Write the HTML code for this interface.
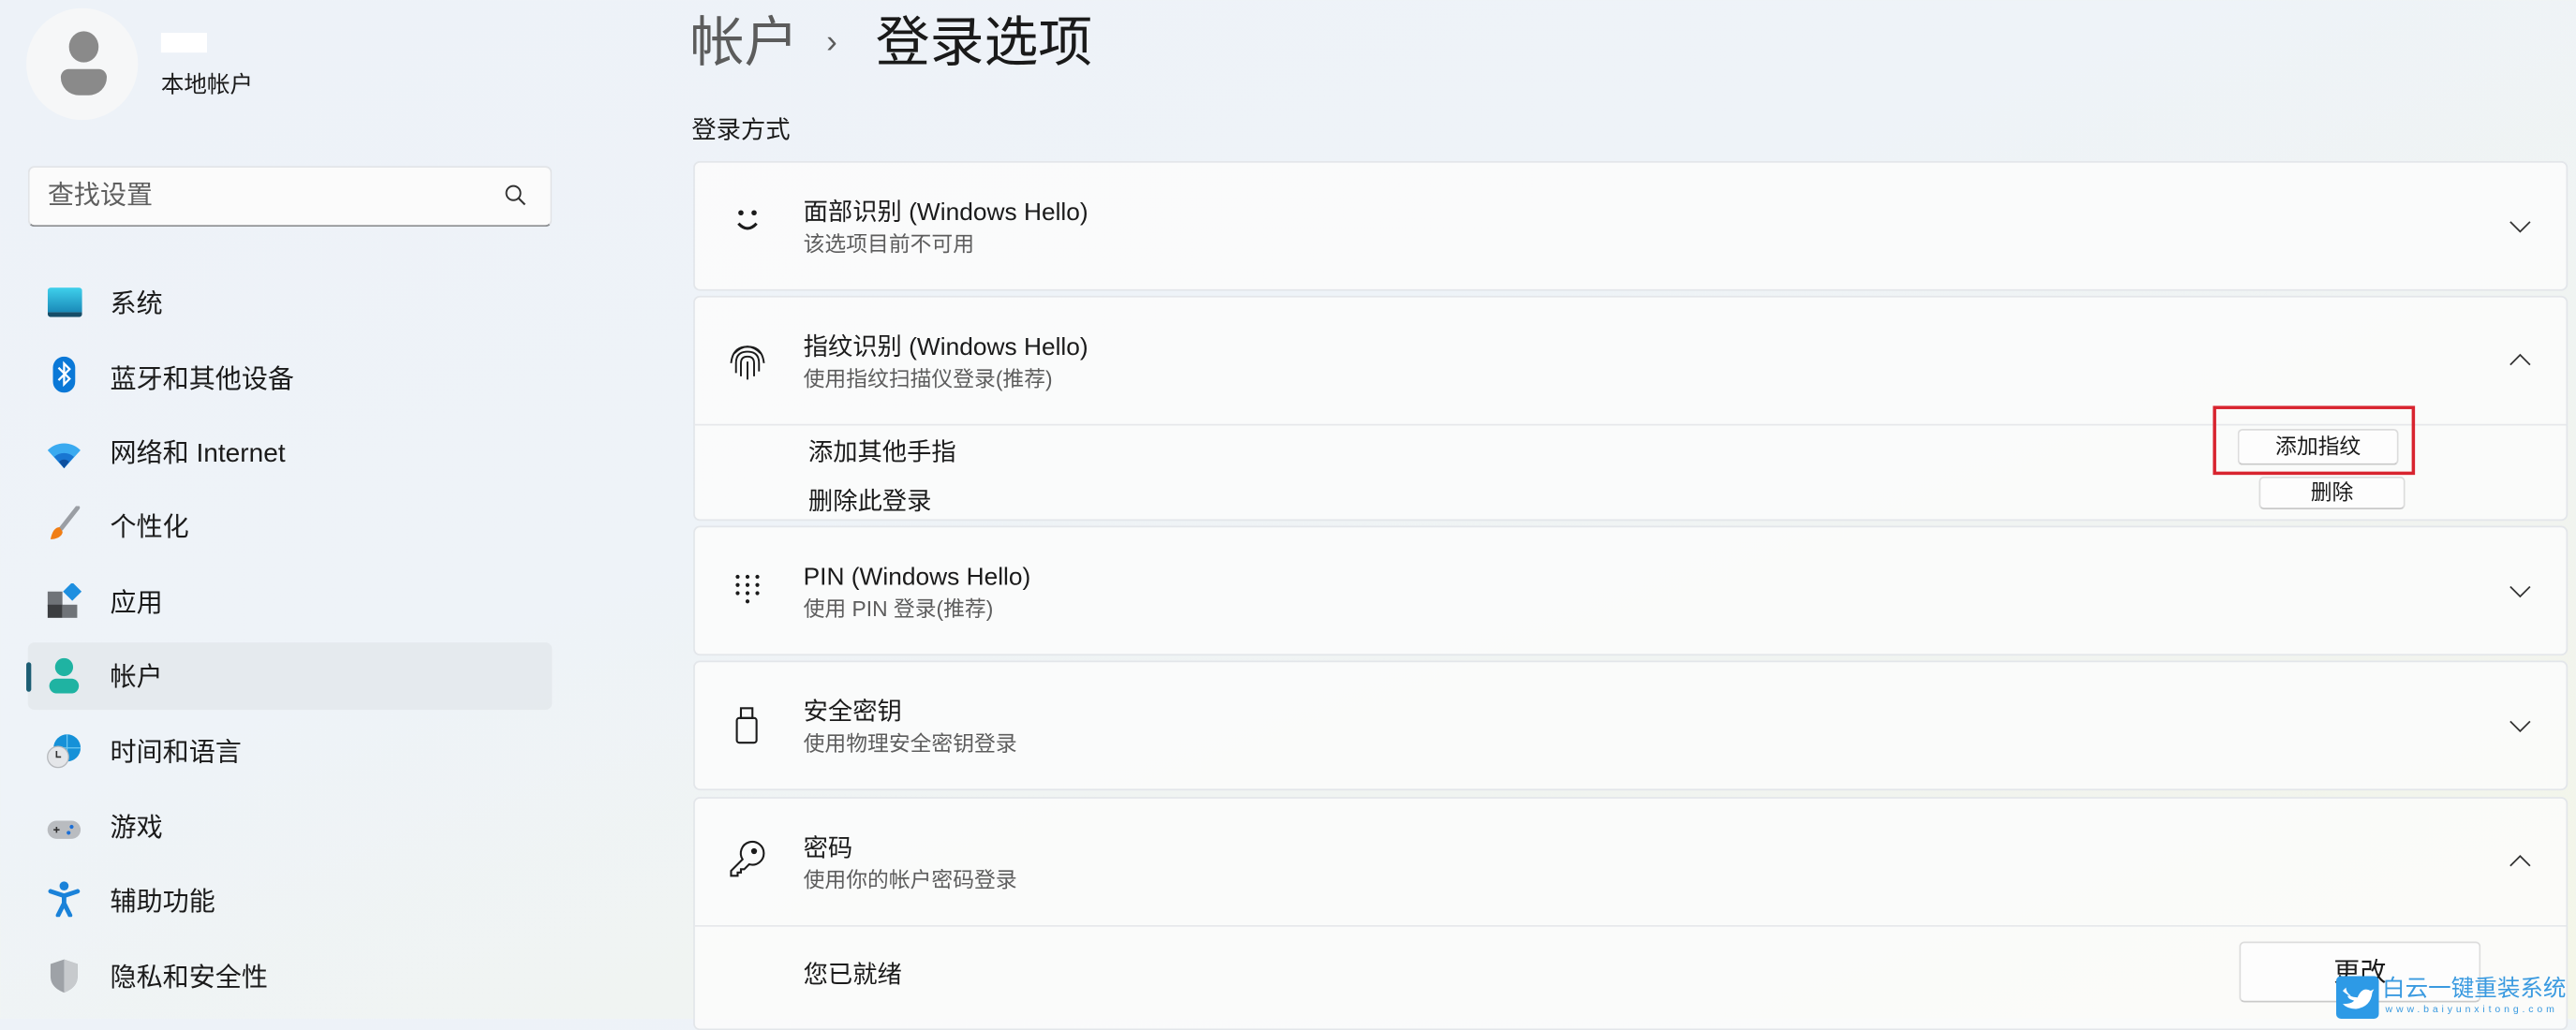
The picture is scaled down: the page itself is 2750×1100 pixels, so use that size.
<!DOCTYPE html>
<html><head><meta charset="utf-8">
<style>
html,body{margin:0;padding:0;width:2750px;height:1088px;overflow:hidden}
body{background:linear-gradient(160deg,#edf2f8 0%,#eef3f8 40%,#f1f4ef 75%,#f4f6e8 100%);font-family:"Liberation Sans","Noto Sans CJK SC",sans-serif;color:#1b1b1b}
#s{position:absolute;left:0;top:0;width:1568px;height:620px;transform:scale(1.75383,1.75484);transform-origin:0 0}
.a{position:absolute;white-space:nowrap}
.nav{position:absolute;left:67px;font-size:16px;line-height:20px;color:#1b1b1b}
.ic{position:absolute;left:28px;width:22px;height:22px}
.card{position:absolute;left:422px;width:1139px;background:rgba(251,252,252,0.85);border:1px solid #e3e6ea;border-radius:4px}
.t{position:absolute;left:66px;font-size:15px;line-height:20px;color:#1b1b1b}
.st{position:absolute;left:66px;font-size:13px;line-height:18px;color:#5d5d5d}
.chev{position:absolute;left:1104px;width:14px;height:8px}
.btn{position:absolute;background:#fdfdfd;border:1px solid #dcdcdc;border-bottom-color:#c9c9c9;border-radius:3px;font-size:13px;text-align:center;color:#1b1b1b}
</style></head><body><div id="s">
<div class="a" style="left:16px;top:5px;width:68px;height:68px;border-radius:50%;background:#f6f7f8"></div>
<div class="a" style="left:42px;top:19px;width:18px;height:19px;border-radius:50%;background:#8a8a8a"></div>
<div class="a" style="left:37px;top:42px;width:28px;height:16px;border-radius:5px 5px 11px 11px;background:#8a8a8a"></div>
<div class="a" style="left:98px;top:20px;width:28px;height:12px;background:#fff"></div>
<div class="a" style="left:98px;top:42px;font-size:14px;line-height:18px">本地帐户</div>
<div class="a" style="left:17px;top:101px;width:317px;height:35px;background:#fbfbfb;border:1px solid #e2e4e7;border-bottom:1px solid #8b8d90;border-radius:4px"></div>
<div class="a" style="left:29px;top:110px;font-size:16px;line-height:20px;color:#5f5f5f">查找设置</div>
<svg class="a" style="left:307px;top:112px" width="14" height="14" viewBox="0 0 14 14"><circle cx="5.5" cy="5.5" r="4.3" fill="none" stroke="#333" stroke-width="1.1"/><path d="M8.6 8.6L12.5 12.5" stroke="#333" stroke-width="1.2"/></svg>
<div class="a" style="left:17px;top:391px;width:319px;height:41px;background:rgba(225,229,233,0.7);border-radius:4px"></div>
<div class="a" style="left:16px;top:403px;width:3px;height:18px;background:#1c5d73;border-radius:2px"></div>
<div class="ic" style="top:175px;border-radius:2px;background:linear-gradient(#3fd0ec,#1a8ab8);border-bottom:3px solid #174d68;height:15px;width:21px;left:29px"></div>
<svg class="ic" style="top:217px" viewBox="0 0 22 26" width="22" height="26"><rect x="3" y="0" width="16" height="26" rx="8" fill="#0a78d7"/><path d="M7 8l8 8-4 4V5l4 4-8 8" fill="none" stroke="#fff" stroke-width="1.5"/></svg>
<svg class="ic" style="top:266px" viewBox="0 0 22 18" width="22" height="18"><path d="M1 6a14 14 0 0 1 20 0L11 17z" fill="#3aaaf0"/><path d="M5 10a9 9 0 0 1 12 0L11 17z" fill="#1976d2"/><path d="M8 13a4 4 0 0 1 6 0L11 17z" fill="#0d4f9e"/></svg>
<svg class="ic" style="top:308px" viewBox="0 0 22 24" width="22" height="24"><path d="M20 1L9 15" stroke="#9a9ea4" stroke-width="3" stroke-linecap="round"/><path d="M8 14c-3 0-5 3-6 8 4 0 8-2 8-5z" fill="#f07d14"/></svg>
<svg class="ic" style="top:355px" viewBox="0 0 22 22" width="22" height="22"><rect x="1" y="5" width="9" height="9" fill="#6f7378"/><rect x="1" y="13" width="9" height="8" fill="#3b3d40"/><rect x="10" y="13" width="9" height="8" fill="#6f7378"/><rect x="12" y="1" width="8" height="8" fill="#1e8fe0" transform="rotate(45 16 5)"/></svg>
<svg class="ic" style="top:400px" viewBox="0 0 22 22" width="22" height="22"><circle cx="11" cy="6" r="5.5" fill="#1fb3a2"/><rect x="2" y="13" width="18" height="9" rx="4.5" fill="#1fb3a2"/></svg>
<svg class="ic" style="top:446px" viewBox="0 0 24 24" width="24" height="24"><circle cx="14" cy="10" r="9" fill="#1591d8"/><path d="M5 10h18M14 1v18" stroke="#6cc6f0" stroke-width="0.8"/><circle cx="8" cy="16" r="7" fill="#e4e6e9" stroke="#b5b8bc" stroke-width="0.8"/><path d="M7 12v4h3" stroke="#333" stroke-width="1" fill="none"/></svg>
<svg class="ic" style="top:494px" viewBox="0 0 24 16" width="24" height="16"><rect x="1" y="2" width="22" height="12" rx="6" fill="#b9bcc0"/><path d="M5 8h4M7 6v4" stroke="#333" stroke-width="1"/><circle cx="17" cy="6" r="1.3" fill="#1b6fd6"/><circle cx="15" cy="10" r="1.3" fill="#1b6fd6"/></svg>
<svg class="ic" style="top:536px" viewBox="0 0 22 24" width="22" height="24"><circle cx="11" cy="3.5" r="3" fill="#1a82d9"/><path d="M2 7l9 3 9-3M11 10v5l-4 8M11 15l4 8" stroke="#1a82d9" stroke-width="3" fill="none" stroke-linecap="round"/></svg>
<svg class="ic" style="top:583px" viewBox="0 0 22 24" width="22" height="24"><path d="M11 1l9 3v8c0 6-4 9-9 11-5-2-9-5-9-11V4z" fill="#9ea2a7"/><path d="M11 1l9 3v8c0 6-4 9-9 11z" fill="#c7cacd"/></svg>
<div class="nav" style="top:176px">系统</div>
<div class="nav" style="top:222px">蓝牙和其他设备</div>
<div class="nav" style="top:267px">网络和 Internet</div>
<div class="nav" style="top:312px">个性化</div>
<div class="nav" style="top:358px">应用</div>
<div class="nav" style="top:403px">帐户</div>
<div class="nav" style="top:449px">时间和语言</div>
<div class="nav" style="top:495px">游戏</div>
<div class="nav" style="top:540px">辅助功能</div>
<div class="nav" style="top:586px">隐私和安全性</div>
<div class="a" style="left:420px;top:4px;font-size:33px;line-height:44px;color:#5c5c5c">帐户</div>
<div class="a" style="left:503px;top:12px;font-size:20px;line-height:28px;color:#5c5c5c">›</div>
<div class="a" style="left:533px;top:4px;font-size:33px;line-height:44px;color:#1a1a1a">登录选项</div>
<div class="a" style="left:421px;top:70px;font-size:15px;line-height:20px">登录方式</div>
<div class="card" style="top:98px;height:77px">
<svg class="a" style="left:23px;top:27px" width="18" height="18" viewBox="0 0 18 18"><circle cx="5" cy="3.5" r="1.6" fill="#1b1b1b"/><circle cx="13" cy="3.5" r="1.6" fill="#1b1b1b"/><path d="M3.5 10q5.5 6 11 0" fill="none" stroke="#1b1b1b" stroke-width="1.8"/></svg>
<div class="t" style="top:21px">面部识别 (Windows Hello)</div>
<div class="st" style="top:41px">该选项目前不可用</div>
<svg class="chev" style="top:35px" viewBox="0 0 14 8"><path d="M1 1l6 6 6-6" fill="none" stroke="#333" stroke-width="1"/></svg>
</div>
<div class="card" style="top:180px;height:135px">
<svg class="a" style="left:20px;top:26px" width="24" height="26" viewBox="0 0 24 26" fill="none" stroke="#1b1b1b" stroke-width="1.1"><path d="M4 8q8-8 16 0"/><path d="M2 14q1-10 10-10t10 10"/><path d="M5 20v-6q0-7 7-7t7 7v5"/><path d="M8 22v-8q0-4 4-4t4 4v8"/><path d="M12 13v11"/></svg>
<div class="t" style="top:21px">指纹识别 (Windows Hello)</div>
<div class="st" style="top:41px">使用指纹扫描仪登录(推荐)</div>
<svg class="chev" style="top:34px" viewBox="0 0 14 8"><path d="M1 7l6-6 6 6" fill="none" stroke="#333" stroke-width="1"/></svg>
<div class="a" style="left:0;top:77px;width:1139px;height:1px;background:#e6e8eb"></div>
<div class="a" style="left:69px;top:85px;font-size:15px;line-height:20px">添加其他手指</div>
<div class="a" style="left:69px;top:115px;font-size:15px;line-height:20px">删除此登录</div>
</div>
<div class="btn" style="left:1362px;top:261px;width:96px;height:20px;line-height:20px">添加指纹</div>
<div class="btn" style="left:1375px;top:290px;width:87px;height:18px;line-height:18px">删除</div>
<div class="a" style="left:1347px;top:247px;width:119px;height:38px;border:2px solid #d8242f"></div>
<div class="card" style="top:320px;height:77px">
<svg class="a" style="left:24px;top:28px" width="16" height="22" viewBox="0 0 16 22" fill="#1b1b1b"><circle cx="2" cy="2" r="1.2"/><circle cx="8" cy="2" r="1.2"/><circle cx="14" cy="2" r="1.2"/><circle cx="2" cy="7" r="1.2"/><circle cx="8" cy="7" r="1.2"/><circle cx="14" cy="7" r="1.2"/><circle cx="2" cy="12" r="1.2"/><circle cx="8" cy="12" r="1.2"/><circle cx="14" cy="12" r="1.2"/><circle cx="8" cy="17" r="1.2"/></svg>
<div class="t" style="top:21px">PIN (Windows Hello)</div>
<div class="st" style="top:41px">使用 PIN 登录(推荐)</div>
<svg class="chev" style="top:35px" viewBox="0 0 14 8"><path d="M1 1l6 6 6-6" fill="none" stroke="#333" stroke-width="1"/></svg>
</div>
<div class="card" style="top:402px;height:77px">
<svg class="a" style="left:24px;top:27px" width="16" height="24" viewBox="0 0 16 24" fill="none" stroke="#1b1b1b" stroke-width="1.2"><rect x="4" y="1" width="7" height="6"/><rect x="1.5" y="7" width="12" height="15" rx="1.5"/></svg>
<div class="t" style="top:21px">安全密钥</div>
<div class="st" style="top:41px">使用物理安全密钥登录</div>
<svg class="chev" style="top:35px" viewBox="0 0 14 8"><path d="M1 1l6 6 6-6" fill="none" stroke="#333" stroke-width="1"/></svg>
</div>
<div class="card" style="top:485px;height:140px">
<svg class="a" style="left:19px;top:24px" width="26" height="26" viewBox="0 0 26 26" fill="none" stroke="#1b1b1b" stroke-width="1.2"><path d="M10 13a7 7 0 1 1 4 3l-3 3h-2v2h-2v2H3v-3z"/><circle cx="17" cy="8" r="1.2" fill="#1b1b1b"/></svg>
<div class="t" style="top:21px">密码</div>
<div class="st" style="top:41px">使用你的帐户密码登录</div>
<svg class="chev" style="top:34px" viewBox="0 0 14 8"><path d="M1 7l6-6 6 6" fill="none" stroke="#333" stroke-width="1"/></svg>
<div class="a" style="left:0;top:77px;width:1139px;height:1px;background:#e6e8eb"></div>
<div class="a" style="left:66px;top:98px;font-size:15px;line-height:20px">您已就绪</div>
</div>
<div class="btn" style="left:1363px;top:573px;width:145px;height:35px;line-height:38px;font-size:16px">更改</div>
<svg class="a" style="left:1422px;top:594px" width="26" height="26" viewBox="0 0 26 26"><rect width="26" height="26" rx="3" fill="#2d9ae6"/><path d="M4 9q4 4 9 4q3-7 8-4l2-1-1 2q-1 9-10 10q-5 0-8-3q5 0 7-2q-4-1-4-3h2q-3-2-3-5z" fill="#fff"/></svg>
<div class="a" style="left:1450px;top:592px;font-size:14px;line-height:18px;color:#3a9ae0">白云一键重装系统</div>
<div class="a" style="left:1452px;top:611px;font-size:6px;line-height:8px;color:#3a9ae0;letter-spacing:2.2px">www.baiyunxitong.com</div>
</div></body></html>
